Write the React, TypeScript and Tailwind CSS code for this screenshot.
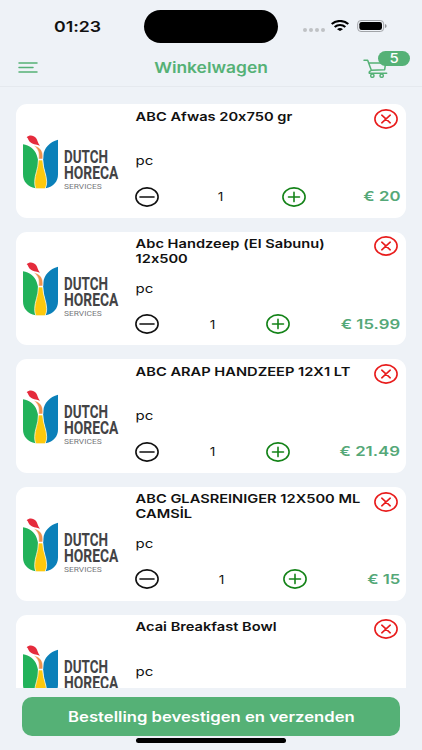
import React from "react";

type Item = { lines: string[]; price?: string; controls?: string };

const items: Item[] = [
  { lines: ["ABC Afwas 20x750 gr"], price: "€ 20", controls: "w-[170.5px]" },
  { lines: ["Abc Handzeep (El Sabunu)", "12x500"], price: "€ 15.99", controls: "w-[155px]" },
  { lines: ["ABC ARAP HANDZEEP 12X1 LT"], price: "€ 21.49", controls: "w-[154.5px]" },
  { lines: ["ABC GLASREINIGER 12X500 ML", "CAMSİL"], price: "€ 15", controls: "w-[172px]" },
  { lines: ["Acai Breakfast Bowl"] },
];

function Logo() {
  return (
    <svg viewBox="36 100 290 168" className="mt-[29.5px] ml-[6px] h-[56px] w-[96.7px] shrink-0">
      <path d="M39 131C58 134 74 146 80 163C84 176 88 190 84 205C79 222 73 240 77 263C52 258 39 243 39 221Z" fill="#22b25a" />
      <path d="M144 117C119 124 102 141 100 165C98 183 101 198 104 213C109 230 111 245 107 263C131 258 144 243 144 221Z" fill="#0b80b9" />
      <path d="M85 178H98C99 205 110 222 110 243C110 253 108 260 104 264H79C75 260 74 253 74 243C74 222 85 205 85 178Z" fill="#fdc90d" stroke="#fff" strokeWidth="2" />
      <path d="M72 135C91 138 101 152 98 175H86C88 158 85 145 72 135Z" fill="#f0914c" stroke="#fff" strokeWidth="1.5" />
      <path d="M50 110C57 102 71 103 78 112C83 119 83 128 90 135C77 130 67 131 59 123C54 118 55 113 50 110Z" fill="#e52b3c" />
      <g fill="#434345" fontFamily="Roboto, sans-serif" fontWeight="700">
        <text x="162" y="187" fontSize="53" textLength="132" lengthAdjust="spacingAndGlyphs">DUTCH</text>
        <text x="162" y="236" fontSize="54" textLength="163" lengthAdjust="spacingAndGlyphs">HORECA</text>
        <text x="162" y="264" fontSize="23" fontWeight="400" fill="#77787b" textLength="113" lengthAdjust="spacingAndGlyphs">SERVICES</text>
      </g>
    </svg>
  );
}

function RoundIcon({ d, color }: { d: string; color: string }) {
  return (
    <svg viewBox="0 0 24 20" className={`h-5 w-6 shrink-0 ${color}`} fill="none" stroke="currentColor" strokeWidth="1.6" strokeLinecap="round">
      <ellipse cx="12" cy="10" rx="11.1" ry="9.1" />
      <path d={d} />
    </svg>
  );
}

function Card({ item }: { item: Item }) {
  return (
    <article className="flex h-[113.6px] shrink-0 rounded-[11px] bg-white">
      <Logo />
      <div className="ml-[16.5px] flex min-w-0 flex-1 flex-col pr-[6px]">
        <div className="flex h-[49px] justify-between">
          <h2 className="origin-left scale-x-[1.22] pt-[4.3px] pl-[0.5px] text-[12px] leading-[15px] font-semibold whitespace-nowrap">
            {item.lines.map((line) => (
              <span key={line} className="block">{line}</span>
            ))}
          </h2>
          <div className="-ml-10 pt-[4.5px] pr-[2.5px]">
            <RoundIcon color="text-[#e81c1c]" d="M7.8 6.2L16.2 13.8M16.2 6.2L7.8 13.8" />
          </div>
        </div>
        <p className="h-[33.4px] w-fit origin-left scale-x-[1.2] pl-[0.5px] text-[12.5px] leading-[16px]">pc</p>
        {item.price && (
          <div className="flex h-5 items-center justify-between">
            <div className={`flex items-center justify-between ${item.controls}`}>
              <RoundIcon color="text-[#111]" d="M5 10H19" />
              <span className="scale-x-[1.15] pt-px text-[12px]">1</span>
              <RoundIcon color="text-[#148318]" d="M6.5 10H17.5M12 5.4V14.6" />
            </div>
            <span className="origin-right scale-x-[1.26] pt-px text-[13.3px] font-semibold whitespace-nowrap text-[#55a878]">{item.price}</span>
          </div>
        )}
      </div>
    </article>
  );
}

function StatusBar() {
  return (
    <div className="flex h-[48px] items-start">
      <div className="w-[144px] pt-[16.5px] pl-[53.5px]">
        <span className="block w-fit origin-left scale-x-[1.18] text-[15px] leading-[20px] font-semibold">01:23</span>
      </div>
      <div className="mt-[10px] h-[32.5px] w-[134px] rounded-full bg-black" />
      <div className="ml-[24.5px] flex gap-[2px] pt-[28px]">
        <i className="h-[3.5px] w-[4px] rounded-full bg-[#bfc2c5]" />
        <i className="h-[3.5px] w-[4px] rounded-full bg-[#bfc2c5]" />
        <i className="h-[3.5px] w-[4px] rounded-full bg-[#bfc2c5]" />
        <i className="h-[3.5px] w-[4px] rounded-full bg-[#bfc2c5]" />
      </div>
      <svg viewBox="0 0 54 33" className="mt-[20px] ml-[6px] h-[11px] w-[18px]" fill="none" stroke="#000" strokeWidth="6.5">
        <path d="M2 12C16 0 38 0 52 12M11 21C20 13 34 13 43 21" />
        <path d="M18 27.5Q27 20 36 27.5L27 33Z" fill="#000" stroke="none" />
      </svg>
      <svg viewBox="0 0 90 36" className="mt-[20px] ml-[8px] h-[12px] w-[30px]">
        <rect x="2" y="1.5" width="78" height="33" rx="10" fill="none" stroke="#929497" strokeWidth="2.5" />
        <rect x="7" y="6" width="68" height="24" rx="7" fill="#000" />
        <path d="M84 12Q89 14 89 18Q89 22 84 24Z" fill="#929497" />
      </svg>
    </div>
  );
}

function Header() {
  return (
    <header className="flex h-[39px] items-start justify-between border-b border-[#e5e9ee] pr-[11px] pl-[18px] text-[#55b176]">
      <svg viewBox="0 0 20 14" className="mt-[12.5px] h-[14px] w-[20px]" fill="none" stroke="currentColor" strokeWidth="1.5" strokeLinecap="round">
        <path d="M1 2H19M1 6.5H15M1 11H19" />
      </svg>
      <h1 className="ml-[22px] origin-center scale-x-[1.16] pt-[9.5px] text-[15px] leading-[20px] font-semibold">Winkelwagen</h1>
      <div className="relative h-[34px] w-[48px]">
        <svg viewBox="0 0 75 57" className="mt-[11px] h-[19px] w-[25px]" fill="none" stroke="currentColor" strokeWidth="4.5" strokeLinecap="round" strokeLinejoin="round">
          <path d="M3 4H14L25 34L65 32L68 11M18 12H68M25 34Q17 37 19 43H71" />
          <circle cx="28" cy="50" r="5" />
          <circle cx="56" cy="50" r="5" />
        </svg>
        <span className="absolute top-[3px] left-[15.5px] flex h-[15px] w-[32px] items-center justify-center rounded-full bg-[#55b176] pt-px text-[13px] font-medium text-white">
          <span className="scale-x-[1.15]">5</span>
        </span>
      </div>
    </header>
  );
}

export default function App() {
  return (
    <div className="flex h-[750px] w-[422px] flex-col overflow-hidden bg-[#eef2f7] font-['Inter',sans-serif] text-[#111] [font-feature-settings:'calt'_0]">
      <StatusBar />
      <Header />
      <main className="flex h-[601px] shrink-0 flex-col gap-[14px] overflow-hidden pt-[17.3px] pr-[16px] pl-[16px]">
        {items.map((item) => (
          <Card key={item.lines[0]} item={item} />
        ))}
      </main>
      <footer className="flex flex-col items-center pt-[9px]">
        <button className="flex h-[39px] w-[378px] items-center justify-center rounded-[10px] bg-[#55b176] text-[14px] font-semibold text-white">
          <span className="scale-x-[1.19] whitespace-nowrap">Bestelling bevestigen en verzenden</span>
        </button>
        <div className="mt-[2px] h-[4.5px] w-[150px] rounded-full bg-black" />
      </footer>
    </div>
  );
}
